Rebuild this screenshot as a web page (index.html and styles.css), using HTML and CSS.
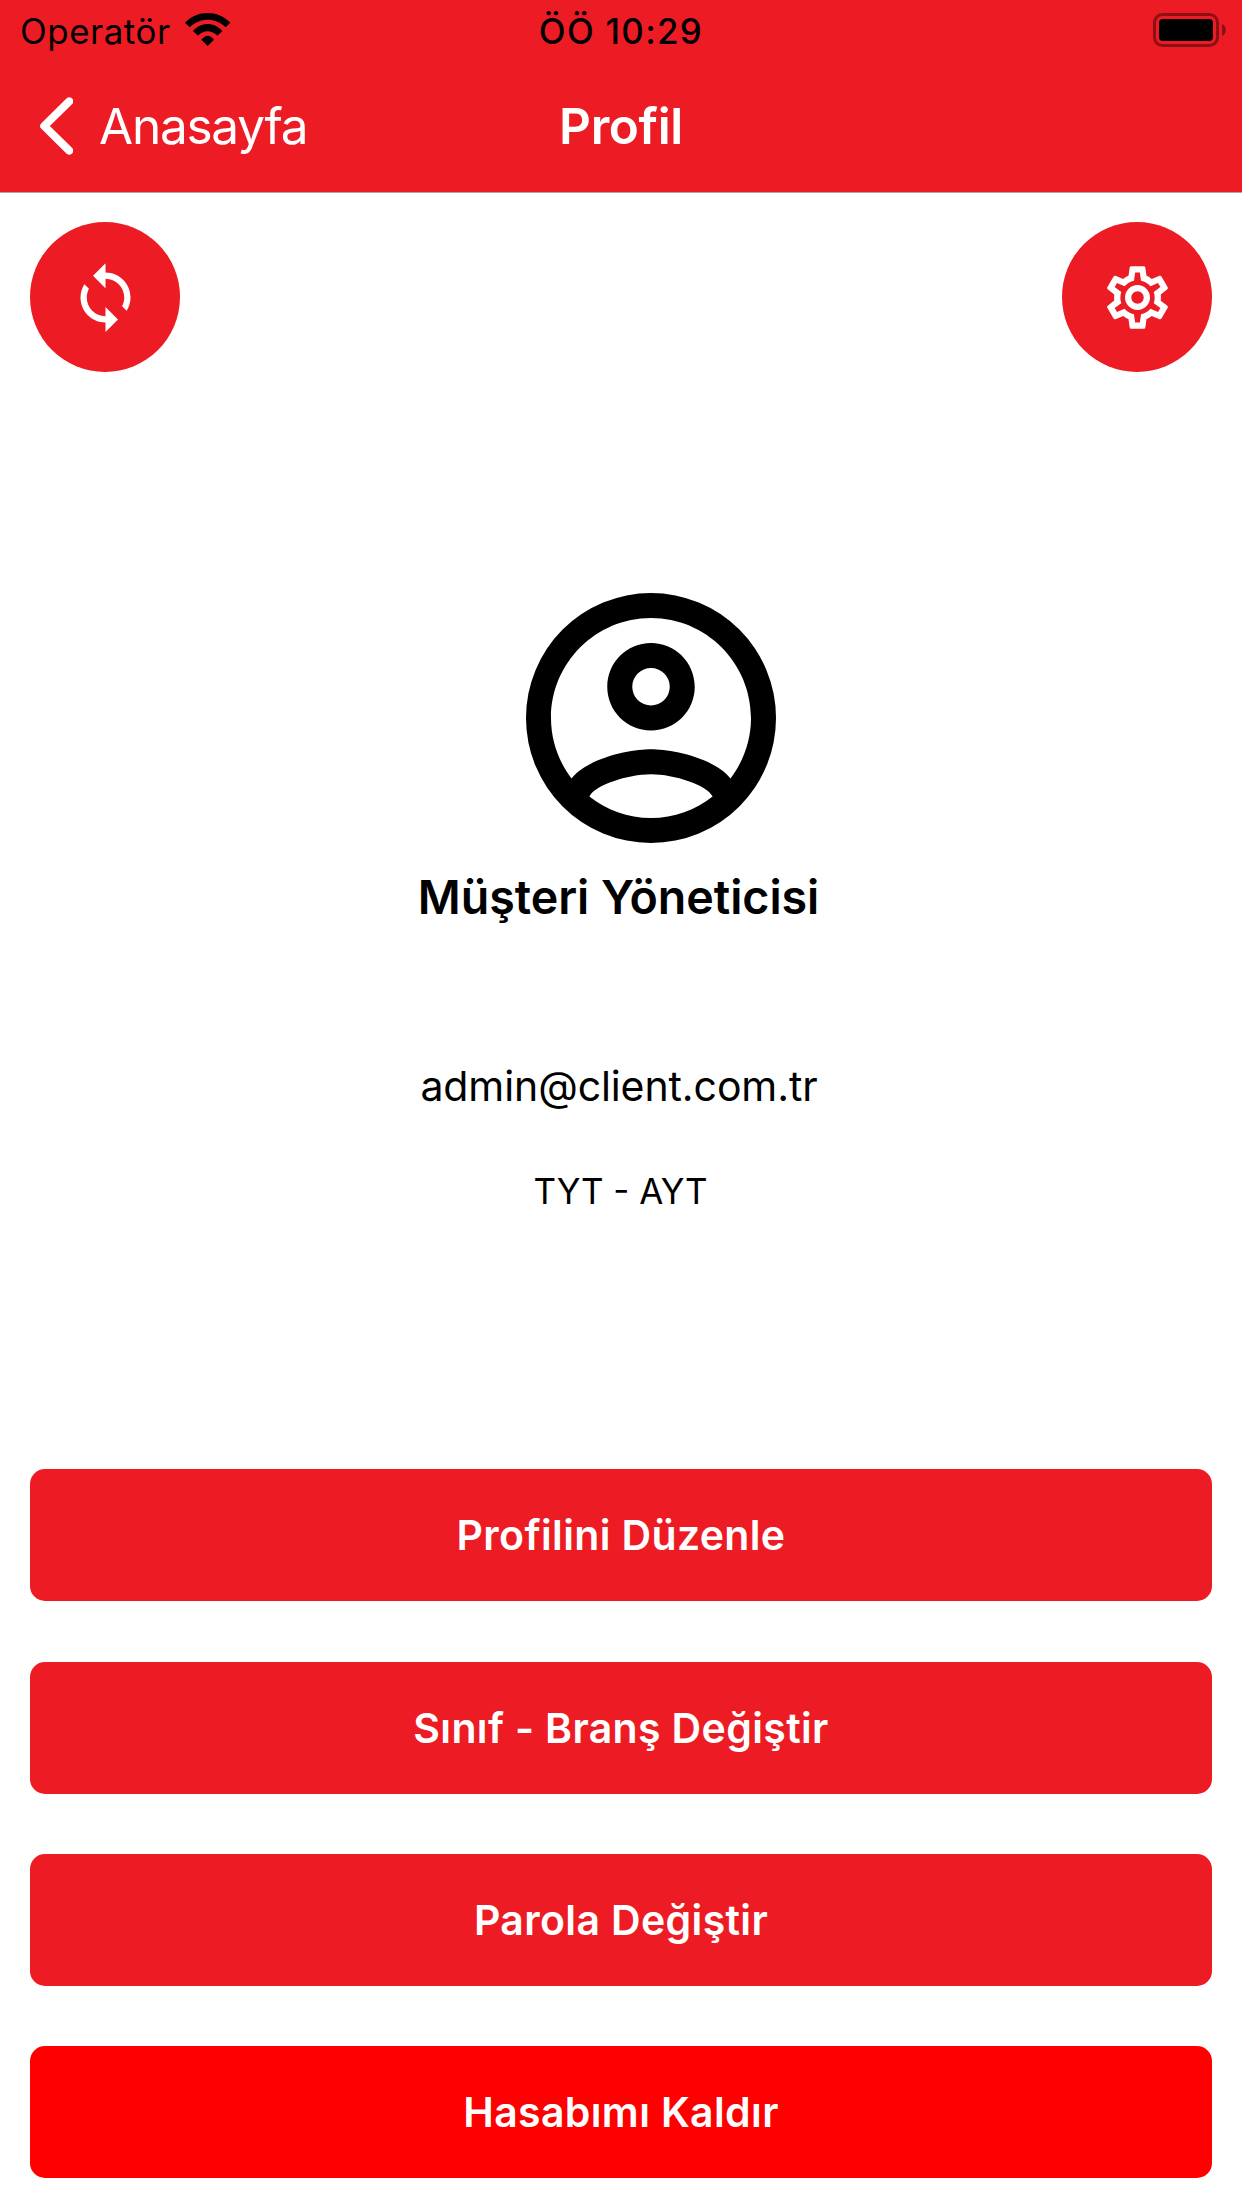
FILE: index.html
```html
<!DOCTYPE html>
<html lang="tr">
<head>
    <meta charset="UTF-8">
    <title>Profil</title>
    <link rel="stylesheet" href="styles.css">
</head>
<body>
    <header>
        <div class="status-bar">
            <div class="carrier">
                <span>Operatör</span>
                <svg class="wifi" viewBox="550 36 144 105">
                    <path d="M553 68C590 29 652 29 689 68L675 82C644 52 598 52 567 82Z"/>
                    <path d="M577 93C601 65 641 65 665 93L650 107C634 89 607 89 592 107Z"/>
                    <path d="M602 119Q621 96 640 119L621 138Z"/>
                </svg>
            </div>
            <div class="time">ÖÖ 10:29</div>
            <svg class="battery" width="74" height="34" viewBox="0 0 74 34">
                <rect x="1.5" y="1.5" width="63" height="31" rx="8" fill="none" stroke="#000" stroke-opacity="0.4" stroke-width="3"/>
                <rect x="6" y="6" width="54" height="22" rx="4"/>
                <path d="M69 11C74.3 13 74.3 21 69 23Z" fill-opacity="0.4"/>
            </svg>
        </div>
        <div class="nav-bar">
            <a class="back">
                <svg width="37" height="60" viewBox="0 0 37 60">
                    <path d="M33.2 5.4L8.2 30L33.2 54.6" fill="none" stroke="#fff" stroke-width="8" stroke-linecap="round" stroke-linejoin="round"/>
                </svg>
                <span>Anasayfa</span>
            </a>
            <h1>Profil</h1>
        </div>
    </header>

    <main>
        <div class="actions">
            <button class="round-btn" aria-label="Yenile">
                <svg viewBox="0 0 24 24"><path d="M12 4V1L8 5l4 4V6c3.31 0 6 2.69 6 6 0 1.01-.25 1.97-.7 2.8l1.46 1.46C19.54 15.03 20 13.57 20 12c0-4.42-3.58-8-8-8zm0 14c-3.31 0-6-2.69-6-6 0-1.01.25-1.97.7-2.8L5.24 7.74C4.46 8.97 4 10.43 4 12c0 4.42 3.58 8 8 8v3l4-4-4-4v3z"/></svg>
            </button>
            <button class="round-btn" aria-label="Ayarlar">
                <svg viewBox="0 0 24 24"><path d="M12,8A4,4 0 0,1 16,12A4,4 0 0,1 12,16A4,4 0 0,1 8,12A4,4 0 0,1 12,8M12,10A2,2 0 0,0 10,12A2,2 0 0,0 12,14A2,2 0 0,0 14,12A2,2 0 0,0 12,10M10,22C9.75,22 9.54,21.82 9.5,21.58L9.13,18.93C8.5,18.68 7.96,18.34 7.44,17.94L4.95,18.95C4.73,19.03 4.46,18.95 4.34,18.73L2.34,15.27C2.21,15.05 2.27,14.78 2.46,14.63L4.57,12.97L4.5,12L4.57,11L2.46,9.37C2.27,9.22 2.21,8.95 2.34,8.73L4.34,5.27C4.46,5.05 4.73,4.96 4.95,5.05L7.44,6.05C7.96,5.66 8.5,5.32 9.13,5.07L9.5,2.42C9.54,2.18 9.75,2 10,2H14C14.25,2 14.46,2.18 14.5,2.42L14.87,5.07C15.5,5.32 16.04,5.66 16.56,6.05L19.05,5.05C19.27,4.96 19.54,5.05 19.66,5.27L21.66,8.73C21.79,8.95 21.73,9.22 21.54,9.37L19.43,11L19.5,12L19.43,13L21.54,14.63C21.73,14.78 21.79,15.05 21.66,15.27L19.66,18.73C19.54,18.95 19.27,19.04 19.05,18.95L16.56,17.95C16.04,18.34 15.5,18.68 14.87,18.93L14.5,21.58C14.46,21.82 14.25,22 14,22H10M11.25,4L10.88,6.61C9.68,6.86 8.62,7.5 7.85,8.39L5.44,7.35L4.69,8.65L6.8,10.2C6.4,11.37 6.4,12.64 6.8,13.8L4.68,15.36L5.43,16.66L7.86,15.62C8.63,16.5 9.68,17.14 10.87,17.38L11.24,20H12.76L13.13,17.39C14.32,17.14 15.37,16.5 16.14,15.62L18.57,16.66L19.32,15.36L17.2,13.81C17.6,12.64 17.6,11.37 17.2,10.2L19.31,8.65L18.56,7.35L16.15,8.39C15.38,7.5 14.32,6.86 13.12,6.62L12.75,4H11.25Z"/></svg>
            </button>
        </div>

        <div class="profile">
            <svg class="avatar" viewBox="0 0 24 24"><path d="M12,2A10,10 0 0,0 2,12A10,10 0 0,0 12,22A10,10 0 0,0 22,12A10,10 0 0,0 12,2M7.07,18.28C7.5,17.38 10.12,16.5 12,16.5C13.88,16.5 16.5,17.38 16.93,18.28C15.57,19.36 13.86,20 12,20C10.14,20 8.43,19.36 7.07,18.28M18.36,16.83C16.93,15.09 13.46,14.5 12,14.5C10.54,14.5 7.07,15.09 5.64,16.83C4.62,15.5 4,13.82 4,12C4,7.59 7.59,4 12,4C16.41,4 20,7.59 20,12C20,13.82 19.38,15.5 18.36,16.83M12,6C10.06,6 8.5,7.56 8.5,9.5C8.5,11.44 10.06,13 12,13C13.94,13 15.5,11.44 15.5,9.5C15.5,7.56 13.94,6 12,6M12,11A1.5,1.5 0 0,1 10.5,9.5A1.5,1.5 0 0,1 12,8A1.5,1.5 0 0,1 13.5,9.5A1.5,1.5 0 0,1 12,11Z"/></svg>
            <h2>Müşteri Yöneticisi</h2>
            <p class="email">admin@client.com.tr</p>
            <p class="grade">TYT - AYT</p>
        </div>

        <div class="menu">
            <button class="btn">Profilini Düzenle</button>
            <button class="btn">Sınıf - Branş Değiştir</button>
            <button class="btn">Parola Değiştir</button>
            <button class="btn danger">Hasabımı Kaldır</button>
        </div>
    </main>
</body>
</html>
```
FILE: styles.css
```css
* {
    box-sizing: border-box;
}

body {
    margin: 0;
    height: 2208px;
    overflow: hidden;
    background: #fff;
    color: #000;
    font-family: Inter, "Liberation Sans", sans-serif;
}

h1, h2, p {
    margin: 0;
}

svg {
    display: block;
    flex: none;
}

header {
    background: #ed1c24;
    border-bottom: 1px solid #a9a9a9;
}

.status-bar {
    display: grid;
    grid-template-columns: 1fr auto 1fr;
    align-items: center;
    height: 60px;
    padding: 2px 15px 0 20px;
    font-size: 34.9px;
    line-height: 58px;
}

.carrier {
    display: flex;
    letter-spacing: 0.55px;
}

.wifi {
    width: 48px;
    height: 35px;
    margin: 10px 0 0 13px;
}

.time {
    font-weight: 500;
    letter-spacing: 1.3px;
    margin-right: 5px;
}

.battery {
    justify-self: end;
    margin-bottom: 2px;
}

.nav-bar {
    display: grid;
    grid-template-columns: 1fr auto 1fr;
    height: 132px;
    padding: 0 36px;
    color: #fff;
    font-size: 49.5px;
    line-height: 132px;
}

.back {
    display: flex;
    align-items: center;
    gap: 26px;
    letter-spacing: -1.25px;
}

.back svg {
    margin-bottom: 1px;
}

h1 {
    font-size: 49.5px;
    font-weight: 600;
    letter-spacing: -0.38px;
}

.actions {
    display: flex;
    justify-content: space-between;
    padding: 29px 30px 0;
}

.round-btn {
    display: flex;
    align-items: center;
    justify-content: center;
    width: 150px;
    height: 150px;
    padding: 1px 0 0;
    border: none;
    border-radius: 50%;
    background: #ed1c24;
}

.round-btn svg {
    width: 75px;
    height: 75px;
    fill: #fff;
}

.profile {
    display: flex;
    flex-direction: column;
    align-items: center;
    margin-top: 196px;
}

.avatar {
    width: 300px;
    height: 300px;
    margin-left: 60px;
}

h2 {
    padding-right: 5px;
    font-size: 46.6px;
    font-weight: 600;
    line-height: 58px;
    letter-spacing: -0.05px;
}

.email {
    margin-top: 135px;
    padding-right: 4px;
    font-size: 41px;
    line-height: 50px;
    letter-spacing: -0.1px;
}

.grade {
    margin-top: 58px;
    padding-right: 1px;
    font-size: 34.9px;
    line-height: 44px;
}

.menu {
    display: flex;
    flex-direction: column;
    gap: 60px;
    margin-top: 256px;
    padding: 0 30px;
}

.btn {
    height: 132px;
    border: none;
    border-radius: 15px;
    background: #ed1c24;
    color: #fff;
    font-family: inherit;
    font-size: 41px;
    font-weight: 600;
    letter-spacing: 0.36px;
}

.btn:first-child {
    margin-bottom: 1px;
}

.danger {
    background: #f00;
}
```
